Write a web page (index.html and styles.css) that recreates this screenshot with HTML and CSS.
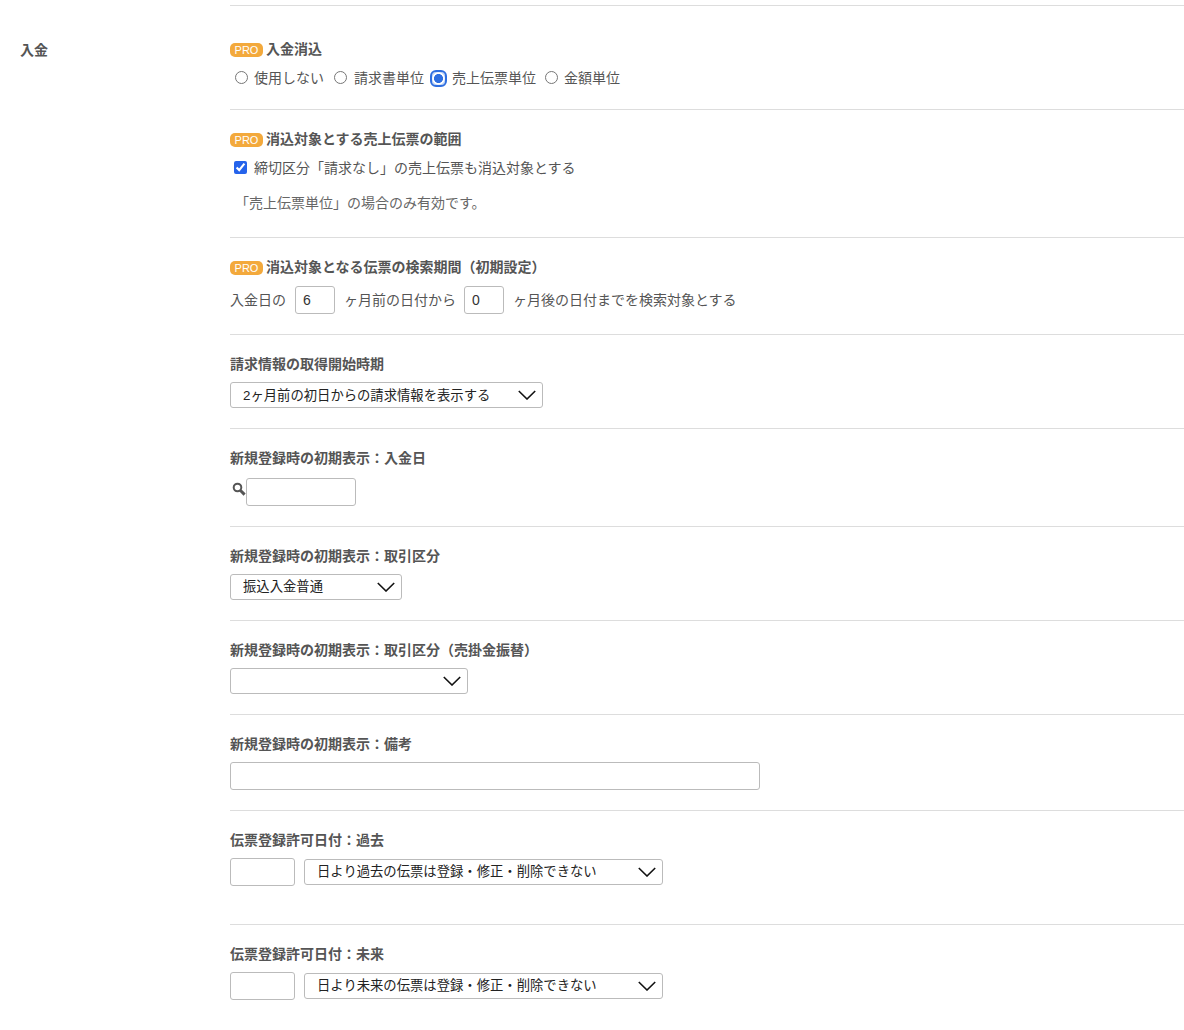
FILE: index.html
```html
<!DOCTYPE html>
<html lang="ja">
<head>
    <meta charset="UTF-8">
    <link rel="stylesheet" href="styles.css">
</head>
<body>
    <div class="page">
        <div class="side-title">入金</div>
        <div class="main">
            <div class="top-rule"></div>

            <div class="section first">
                <div class="heading"><span class="badge">PRO</span>入金消込</div>
                <div class="radio-row">
                    <label class="choice"><input type="radio" name="clear">使用しない</label>
                    <label class="choice"><input type="radio" name="clear">請求書単位</label>
                    <label class="choice"><input type="radio" name="clear" class="focused" checked>売上伝票単位</label>
                    <label class="choice"><input type="radio" name="clear">金額単位</label>
                </div>
            </div>

            <div class="section">
                <div class="heading"><span class="badge">PRO</span>消込対象とする売上伝票の範囲</div>
                <label class="check-row"><input type="checkbox" checked>締切区分「請求なし」の売上伝票も消込対象とする</label>
                <p class="note">「売上伝票単位」の場合のみ有効です。</p>
            </div>

            <div class="section">
                <div class="heading"><span class="badge">PRO</span>消込対象となる伝票の検索期間（初期設定）</div>
                <div class="period-row">
                    入金日の
                    <input type="text" class="text-input month" value="6">
                    ヶ月前の日付から
                    <input type="text" class="text-input month second" value="0">
                    ヶ月後の日付までを検索対象とする
                </div>
            </div>

            <div class="section">
                <div class="heading">請求情報の取得開始時期</div>
                <div class="select-wrap w-313">
                    <select><option>2ヶ月前の初日からの請求情報を表示する</option></select>
                    <svg class="chevron" viewBox="0 0 18 10"><polyline points="0.8,1 9,9 17.2,1"/></svg>
                </div>
            </div>

            <div class="section">
                <div class="heading">新規登録時の初期表示：入金日</div>
                <div class="search-row">
                    <svg class="search-icon" viewBox="0 0 14 14">
                        <circle cx="5.5" cy="5.5" r="3.8"/>
                        <line x1="8.5" y1="8.5" x2="12.6" y2="12.6"/>
                    </svg>
                    <input type="text" class="text-input date">
                </div>
            </div>

            <div class="section">
                <div class="heading">新規登録時の初期表示：取引区分</div>
                <div class="select-wrap w-172">
                    <select><option>振込入金普通</option></select>
                    <svg class="chevron" viewBox="0 0 18 10"><polyline points="0.8,1 9,9 17.2,1"/></svg>
                </div>
            </div>

            <div class="section">
                <div class="heading">新規登録時の初期表示：取引区分（売掛金振替）</div>
                <div class="select-wrap w-238">
                    <select><option></option></select>
                    <svg class="chevron" viewBox="0 0 18 10"><polyline points="0.8,1 9,9 17.2,1"/></svg>
                </div>
            </div>

            <div class="section">
                <div class="heading">新規登録時の初期表示：備考</div>
                <input type="text" class="text-input memo">
            </div>

            <div class="section tall">
                <div class="heading">伝票登録許可日付：過去</div>
                <div class="limit-row">
                    <input type="text" class="text-input days">
                    <div class="select-wrap w-359">
                        <select><option>日より過去の伝票は登録・修正・削除できない</option></select>
                        <svg class="chevron" viewBox="0 0 18 10"><polyline points="0.8,1 9,9 17.2,1"/></svg>
                    </div>
                </div>
            </div>

            <div class="section last">
                <div class="heading">伝票登録許可日付：未来</div>
                <div class="limit-row">
                    <input type="text" class="text-input days">
                    <div class="select-wrap w-359">
                        <select><option>日より未来の伝票は登録・修正・削除できない</option></select>
                        <svg class="chevron" viewBox="0 0 18 10"><polyline points="0.8,1 9,9 17.2,1"/></svg>
                    </div>
                </div>
            </div>
        </div>
    </div>
</body>
</html>
```

FILE: styles.css
```css
* {
    margin: 0;
    padding: 0;
    box-sizing: border-box;
}

body {
    font-family: "Liberation Sans", "Noto Sans CJK JP", sans-serif;
    font-size: 14px;
    line-height: 20px;
    color: #555;
    background: #fff;
    overflow: hidden;
}

.page {
    display: flex;
}

.side-title {
    width: 230px;
    flex-shrink: 0;
    padding: 40px 0 0 20px;
    font-weight: bold;
}

.main {
    flex: 1;
    min-width: 0;
}

.top-rule {
    height: 6px;
    border-bottom: 1px solid #ddd;
}

.section {
    padding: 19px 0 20px;
    border-bottom: 1px solid #ddd;
}

.section.first {
    padding-top: 33px;
    padding-bottom: 21px;
}

.section.tall {
    padding-bottom: 38px;
}

.section.last {
    border-bottom: none;
}

.heading {
    display: flex;
    align-items: center;
    height: 20px;
    margin-bottom: 8px;
    font-weight: bold;
}

.badge {
    width: 33px;
    height: 14px;
    margin: 2px 3px 0 0;
    border-radius: 5px;
    background: #f3a93c;
    color: #fff;
    font-size: 11px;
    font-weight: normal;
    line-height: 15px;
    text-align: center;
}

.radio-row {
    display: flex;
    margin-top: 9px;
    padding-left: 5px;
}

.choice {
    display: flex;
    align-items: center;
    margin-right: 10px;
}

.choice input {
    width: 13px;
    height: 13px;
    margin: 0 6px 2px 0;
    accent-color: #2563eb;
}

.choice:nth-child(2) {
    margin-right: 9px;
}

.choice:nth-child(2) input {
    margin-right: 7px;
}

.choice:nth-child(3) {
    margin-right: 9px;
}

/* keyboard focus ring is a rounded square round the radio */
.choice input.focused {
    appearance: none;
    margin: 0 7px 0 -1px;
    border-radius: 4px;
    outline: 2.5px solid #2f6fe0;
    outline-offset: 0;
    background: radial-gradient(circle, #2f6fe0 0 4.2px, #fff 4.8px 5.8px, #bcd2f6 6.6px);
}

.check-row {
    display: flex;
    align-items: center;
    margin-top: 9px;
    padding-left: 4px;
}

.check-row input {
    width: 13px;
    height: 13px;
    margin: 0 7px 2px 0;
    accent-color: #2563eb;
}

.note {
    margin-top: 15px;
    padding: 0 0 4px 5px;
    color: #666;
}

.text-input {
    display: block;
    height: 28px;
    padding: 0 7px;
    border: 1px solid #bbb;
    border-radius: 3px;
    background: #fff;
    color: #333;
    font-family: inherit;
    font-size: 14px;
}

.text-input.month {
    width: 40px;
    margin: 0 5px;
}

.text-input.month.second {
    margin-left: 4px;
}

.text-input.date {
    width: 110px;
}

.text-input.memo {
    width: 530px;
}

.text-input.days {
    width: 65px;
}

.period-row {
    display: flex;
    align-items: center;
    gap: 4px;
    margin-top: 9px;
}

.search-row {
    display: flex;
    margin-top: 10px;
}

.search-icon {
    width: 14px;
    height: 14px;
    margin: 4px 0 0 2px;
    fill: none;
    stroke: #555;
    stroke-width: 2;
}

.search-icon line {
    stroke-width: 3;
}

.limit-row {
    display: flex;
    align-items: center;
    gap: 9px;
}

.select-wrap {
    position: relative;
    height: 26px;
}

.w-172 { width: 172px; }
.w-238 { width: 238px; }
.w-313 { width: 313px; }
.w-359 { width: 359px; }

.select-wrap select {
    display: block;
    width: 100%;
    height: 100%;
    padding: 0 30px 0 12px;
    border: 1px solid #bbb;
    border-radius: 3px;
    background: #fff;
    color: #222;
    font-family: inherit;
    font-size: 13.33px;
    appearance: none;
}

.w-172 select,
.w-359 select {
    padding-bottom: 2px;
}

.chevron {
    position: absolute;
    top: 8px;
    right: 7px;
    width: 18px;
    height: 10px;
    fill: none;
    stroke: #111;
    stroke-width: 1.6;
    pointer-events: none;
}
```
